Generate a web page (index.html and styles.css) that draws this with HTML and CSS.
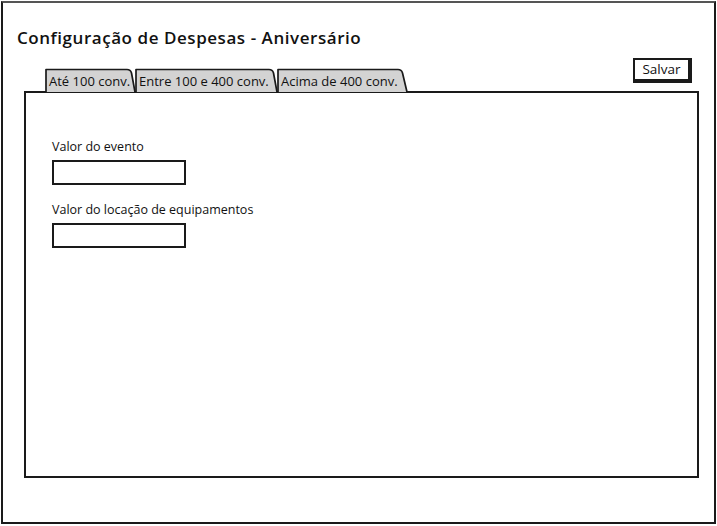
FILE: index.html
```html
<!DOCTYPE html>
<html lang="pt">
<head>
<meta charset="utf-8">
<title>Configuração de Despesas - Aniversário</title>
<link rel="stylesheet" href="styles.css">
</head>
<body>
<div class="frame">
  <h1 class="title">Configuração de Despesas - Aniversário</h1>
  <div class="bar">
    <div class="tabs">
      <div class="tab tab-1">
        <svg class="tab-shape" width="91" height="24" viewBox="0 0 91 24"><path d="M1 24 V1.5 H82 Q85.5 1.5 86.5 5 L90 24" /></svg>
        <span class="tab-label">Até 100 conv.</span>
      </div>
      <div class="tab tab-2">
        <svg class="tab-shape" width="143" height="24" viewBox="0 0 143 24"><path d="M1 24 V1.5 H134 Q137.5 1.5 138.5 5 L142 24" /></svg>
        <span class="tab-label">Entre 100 e 400 conv.</span>
      </div>
      <div class="tab tab-3">
        <svg class="tab-shape" width="131" height="24" viewBox="0 0 131 24"><path d="M1 24 V1.5 H121 Q124.5 1.5 125.5 5 L130 24" /></svg>
        <span class="tab-label">Acima de 400 conv.</span>
      </div>
    </div>
    <button class="save" type="button">Salvar</button>
  </div>
  <div class="panel">
    <label class="field">
      <span class="field-label">Valor do evento</span>
      <span class="input"></span>
    </label>
    <label class="field">
      <span class="field-label">Valor do locação de equipamentos</span>
      <span class="input"></span>
    </label>
  </div>
</div>
</body>
</html>
```

FILE: styles.css
```css
* { box-sizing: border-box; }

html, body {
  margin: 0;
  padding: 0;
  background: #ffffff;
}

body {
  font-family: "Open Sans", "Noto Sans", "Liberation Sans", sans-serif;
  color: #111111;
}

.frame {
  margin: 1px 1px 0 1px;
  width: 715px;
  height: 523px;
  border: 2px solid #1a1a1a;
  border-top-color: #555555;
  padding: 0 15px 0 14px;
  display: flex;
  flex-direction: column;
}

.title {
  margin: 23px 0 0 0;
  font-size: 17px;
  font-weight: 600;
  line-height: 24px;
  letter-spacing: 0.55px;
  color: #111111;
}

.bar {
  margin: 8px 0 0 7px;
  height: 34px;
  display: flex;
  justify-content: space-between;
  align-items: flex-start;
}

.tabs {
  display: flex;
  margin: 10px 0 0 21px;
}

.tab {
  position: relative;
  height: 24px;
  display: flex;
  align-items: center;
}

.tab-1 { width: 90px; }
.tab-2 { width: 142px; }
.tab-3 { width: 130px; }

.tab-shape {
  position: absolute;
  left: 0;
  top: 0;
  overflow: visible;
}

.tab-shape path {
  fill: #d3d3d3;
  stroke: #1a1a1a;
  stroke-width: 1.7;
  stroke-linejoin: round;
}

.tab-label {
  position: relative;
  padding-left: 4px;
  padding-top: 1px;
  font-size: 13px;
  color: #111111;
  white-space: nowrap;
}

.save {
  margin: 0 7px 0 0;
  width: 59px;
  height: 25px;
  padding: 0 0 2px 0;
  background: #ffffff;
  border: 2px solid #1a1a1a;
  border-right-width: 4px;
  border-bottom-width: 4px;
  font-family: inherit;
  font-size: 13.5px;
  color: #111111;
}

.panel {
  margin: -1px 0 0 7px;
  height: 387px;
  border: 2px solid #1a1a1a;
  padding: 45px 0 0 26px;
  display: flex;
  flex-direction: column;
  gap: 16px;
}

.field {
  display: flex;
  flex-direction: column;
  gap: 5px;
}

.field-label {
  font-size: 12.5px;
  line-height: 17px;
  color: #111111;
}

.input {
  display: block;
  width: 134px;
  height: 25px;
  border: 2px solid #1a1a1a;
  background: #ffffff;
}
```
